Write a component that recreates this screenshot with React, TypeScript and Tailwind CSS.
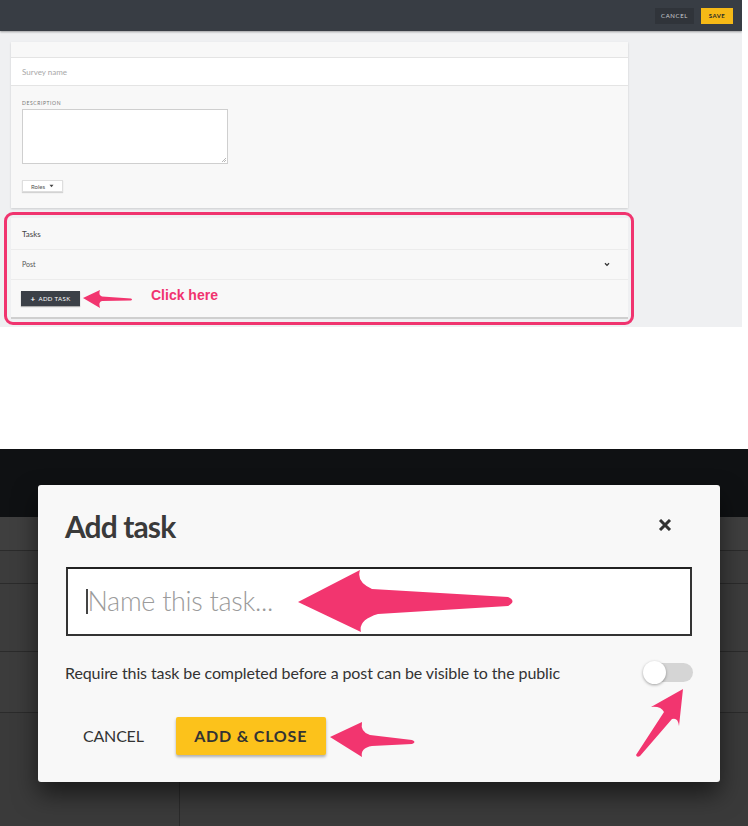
import React from "react";

const PINK = "#f2356f";

function TopScreen() {
  return (
    <div className="w-[742px] h-[327px] bg-[#eff0f2] flex flex-col overflow-hidden">
      <header className="h-[31px] shrink-0 bg-[#383d44] flex items-center justify-end pr-[9px] gap-[7px] shadow-[0_1px_2px_rgba(0,0,0,0.35)]">
        <div className="h-[16px] w-[39px] bg-[#30343a] flex items-center justify-center text-[6px] tracking-[0.6px] text-[#c9ccd0]">
          CANCEL
        </div>
        <div className="h-[16px] w-[32px] bg-[#f6b916] flex items-center justify-center text-[6px] font-bold tracking-[0.5px] text-[#2a2a2a]">
          SAVE
        </div>
      </header>

      <div className="ml-[11px] mt-[11px] w-[617px] bg-[#f8f8f8] shadow-[0_1px_2px_rgba(0,0,0,0.15)]">
        <div className="h-[16px] border-b border-[#e4e4e4]" />
        <div className="h-[28px] bg-white border-b border-[#e4e4e4] px-[11px] flex items-center text-[8px] text-[#a8a8a8]">
          Survey name
        </div>
        <div className="px-[11px] pt-[14px] pb-[16px]">
          <div className="text-[5px] leading-[6px] tracking-[0.6px] text-[#777]">DESCRIPTION</div>
          <div className="relative mt-[3px] w-[206px] h-[55px] bg-white border border-[#cfcfcf]">
            <svg className="absolute right-[1px] bottom-[1px]" width="5" height="5" viewBox="0 0 5 5">
              <path d="M1 5 L5 1 M3 5 L5 3" stroke="#888" strokeWidth="0.6" />
            </svg>
          </div>
          <div className="mt-[16px] w-[41px] h-[12px] bg-white border border-[#dedede] shadow-[0_1px_1px_rgba(0,0,0,0.15)] flex items-center justify-center gap-[4px] text-[6px] text-[#555]">
            <span>Roles</span>
            <svg width="5" height="4" viewBox="0 0 5 4">
              <path d="M0.5 0.8 L2.5 3.2 L4.5 0.8 Z" fill="#444" />
            </svg>
          </div>
        </div>
      </div>

      <div className="ml-[4px] mt-[4px] w-[630px] h-[113px] border-[3px] border-[#f0346f] rounded-[9px] pt-[3px] px-[4px]">
        <div className="w-[617px] bg-[#f8f8f8] border-b-2 border-[#cfcfcf]">
          <div className="h-[32px] border-b border-[#ececec] px-[11px] flex items-center text-[8px] text-[#444]">
            Tasks
          </div>
          <div className="h-[30px] border-b border-[#ececec] pl-[11px] pr-[18px] flex items-center justify-between text-[7px] text-[#555]">
            <span>Post</span>
            <svg width="6" height="5" viewBox="0 0 6 5">
              <path d="M1 1.2 L3 3.4 L5 1.2" stroke="#333" strokeWidth="1.3" fill="none" />
            </svg>
          </div>
          <div className="h-[37px] pl-[10px] flex items-center">
            <div className="h-[15px] w-[59px] bg-[#3b4047] flex items-center justify-center gap-[3px] text-[6px] tracking-[0.4px] text-white shadow-[0_1px_1px_rgba(0,0,0,0.3)]">
              <span className="text-[8px] font-bold leading-none">+</span>
              <span>ADD TASK</span>
            </div>
            <svg className="ml-[2px] mt-[1px]" width="52" height="22" viewBox="0 0 52 22">
              <path d="M1 10 L18 2 Q16 7 20 8.5 L49 10.5 Q51 11.5 49 12.5 L20 13 Q16 14 18 20 Z" fill={PINK} />
            </svg>
            <span
              className="ml-[17px] text-[14px] font-bold text-[#f0336f] leading-none -mt-[8px]"
              style={{ fontFamily: '"Liberation Sans", Arial, sans-serif' }}
            >
              Click here
            </span>
          </div>
        </div>
      </div>
    </div>
  );
}

function BottomScreen() {
  return (
    <div className="relative w-[748px] h-[377px] bg-[#3b3b3b] overflow-hidden">
      {/* background app */}
      <div className="flex flex-col h-full">
        <div className="h-[68px] bg-[#0f1113]" />
        <div className="h-[34px] bg-[#3f3f3f] border-b border-[#2b2b2b]" />
        <div className="h-[33px] bg-[#3c3c3c] border-b border-[#2b2b2b]" />
        <div className="h-[68px] bg-[#3c3c3c] border-b border-[#2b2b2b]" />
        <div className="h-[61px] bg-[#3c3c3c] border-b border-[#2b2b2b]" />
        <div className="flex-1 flex">
          <div className="w-[180px] border-r border-[#2b2b2b] bg-[#3a3a3a]" />
          <div className="flex-1 bg-[#3a3a3a]" />
        </div>
      </div>

      {/* modal */}
      <div className="absolute left-[38px] top-[36px] w-[682px] h-[297px] bg-[#f8f8f8] rounded-[3px] shadow-[0_12px_24px_rgba(0,0,0,0.55)] px-[27px] pt-[26px]">
        <div className="flex items-start justify-between">
          <h2 className="text-[30px] leading-[30px] font-bold tracking-[-0.9px] text-[#3a3a3a]">Add task</h2>
          <svg className="mt-[8px] mr-[21px]" width="14" height="12" viewBox="0 0 14 12">
            <path d="M2 1 L12 11 M12 1 L2 11" stroke="#333" strokeWidth="3" />
          </svg>
        </div>
        <div className="mt-[26px] ml-[1px] w-[626px] h-[69px] bg-white border-2 border-[#333] border-t-[#222] flex items-center pl-[18px]">
          <div className="w-[1.5px] h-[25px] bg-[#444]" />
          <span className="text-[27px] text-[#9b9b9b] font-light tracking-[-0.3px]">Name this task...</span>
        </div>
        <div className="mt-[25px] h-[24px] flex items-center justify-between">
          <span className="text-[16px] text-[#333] tracking-[-0.1px]">
            Require this task be completed before a post can be visible to the public
          </span>
          <div className="relative w-[50px] h-[24px]">
            <div className="absolute right-0 top-[2px] w-[47px] h-[19px] rounded-full bg-[#d5d5d5]" />
            <div className="absolute left-0 top-0 w-[23px] h-[23px] rounded-full bg-white shadow-[0_1px_3px_rgba(0,0,0,0.35)]" />
          </div>
        </div>
        <div className="mt-[32px] flex items-center">
          <div className="px-[18px] text-[16px] text-[#333] tracking-[-0.2px]">CANCEL</div>
          <div className="ml-[14px] w-[150px] h-[38px] bg-[#fcc21b] rounded-[2px] shadow-[0_2px_3px_rgba(0,0,0,0.3)] flex items-center justify-center text-[16px] font-bold tracking-[0.8px] text-[#333]">
            ADD &amp; CLOSE
          </div>
        </div>
      </div>

      {/* annotation arrows */}
      <svg className="absolute inset-0 pointer-events-none" width="748" height="377" viewBox="0 449 748 377">
        <path
          d="M298,602 L360,570 Q356,582 372,589 L508,597 Q517,601 508,606 L378,614 Q358,620 361,632 Z"
          fill={PINK}
        />
        <path
          d="M330,737 L362,722 Q360,732 370,735 L412,740 Q417,742 412,744 L372,746 Q360,748 362,757 Z"
          fill={PINK}
        />
        <path
          d="M683,689 L651,707 Q661,706 664,712 L636,755 Q637,758 640,756 L672,719 Q678,717 679,726 Z"
          fill={PINK}
        />
      </svg>
    </div>
  );
}

export default function App() {
  return (
    <div
      className="w-[748px] h-[826px] bg-white overflow-hidden"
      style={{ fontFamily: 'Lato, "Open Sans", sans-serif' }}
    >
      <TopScreen />
      <div className="h-[122px]" />
      <BottomScreen />
    </div>
  );
}
